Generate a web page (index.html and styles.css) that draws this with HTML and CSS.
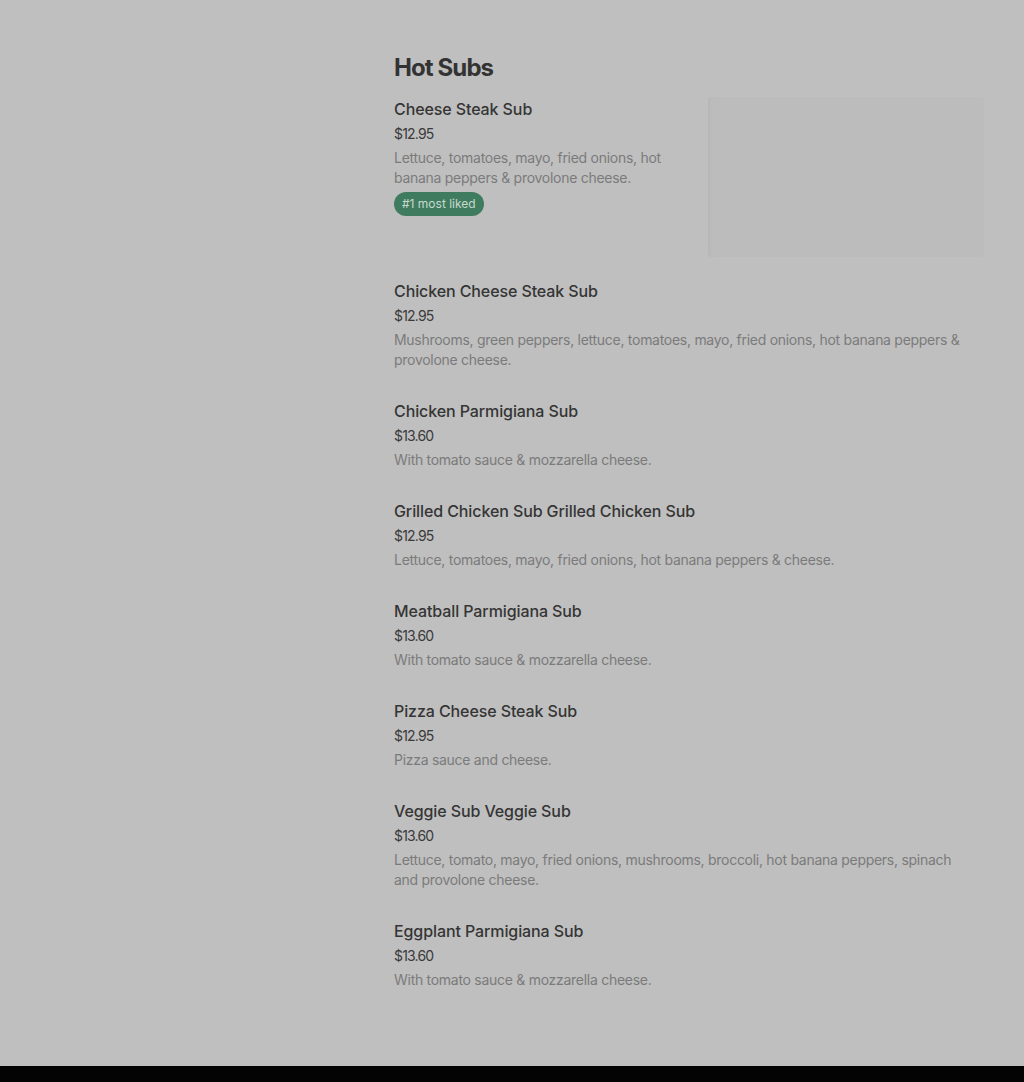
FILE: index.html
```html
<!DOCTYPE html>
<html>
<head>
<meta charset="utf-8">
<link rel="stylesheet" href="styles.css">
</head>
<body>
<div class="page">
  <main class="menu">
    <h2 class="section-title">Hot Subs</h2>
    <ul class="items">
      <li class="item">
        <div class="item-text">
          <div class="name">Cheese Steak Sub</div>
          <div class="price">$12.95</div>
          <div class="desc">Lettuce, tomatoes, mayo, fried onions, hot banana peppers &amp; provolone cheese.</div>
          <span class="badge">#1 most liked</span>
        </div>
        <div class="thumb"></div>
      </li>
      <li class="item">
        <div class="item-text">
          <div class="name">Chicken Cheese Steak Sub</div>
          <div class="price">$12.95</div>
          <div class="desc">Mushrooms, green peppers, lettuce, tomatoes, mayo, fried onions, hot banana peppers &amp; provolone cheese.</div>
        </div>
      </li>
      <li class="item">
        <div class="item-text">
          <div class="name">Chicken Parmigiana Sub</div>
          <div class="price">$13.60</div>
          <div class="desc">With tomato sauce &amp; mozzarella cheese.</div>
        </div>
      </li>
      <li class="item">
        <div class="item-text">
          <div class="name">Grilled Chicken Sub Grilled Chicken Sub</div>
          <div class="price">$12.95</div>
          <div class="desc">Lettuce, tomatoes, mayo, fried onions, hot banana peppers &amp; cheese.</div>
        </div>
      </li>
      <li class="item">
        <div class="item-text">
          <div class="name">Meatball Parmigiana Sub</div>
          <div class="price">$13.60</div>
          <div class="desc">With tomato sauce &amp; mozzarella cheese.</div>
        </div>
      </li>
      <li class="item">
        <div class="item-text">
          <div class="name">Pizza Cheese Steak Sub</div>
          <div class="price">$12.95</div>
          <div class="desc">Pizza sauce and cheese.</div>
        </div>
      </li>
      <li class="item">
        <div class="item-text">
          <div class="name">Veggie Sub Veggie Sub</div>
          <div class="price">$13.60</div>
          <div class="desc">Lettuce, tomato, mayo, fried onions, mushrooms, broccoli, hot banana peppers, spinach and provolone cheese.</div>
        </div>
      </li>
      <li class="item">
        <div class="item-text">
          <div class="name">Eggplant Parmigiana Sub</div>
          <div class="price">$13.60</div>
          <div class="desc">With tomato sauce &amp; mozzarella cheese.</div>
        </div>
      </li>
    </ul>
  </main>
  <footer class="footer-bar"></footer>
</div>
</body>
</html>
```
FILE: styles.css
```css
html, body {
  margin: 0;
  padding: 0;
  background: #bfbfbf;
}
body {
  font-family: Inter, "Noto Sans", sans-serif;
}
.page {
  height: 1082px;
  display: flex;
  flex-direction: column;
  overflow: hidden;
}
.menu {
  flex: 1;
  padding: 51px 40px 0 394px;
}
.section-title {
  margin: 0;
  font-size: 24px;
  line-height: 34px;
  font-weight: 700;
  color: #333333;
  letter-spacing: -0.9px;
}
.items {
  list-style: none;
  margin: 14px 0 0 0;
  padding: 0;
  display: flex;
  flex-direction: column;
  gap: 23px;
  width: 590px;
}
.item {
  display: flex;
  gap: 24px;
}
.item-text {
  flex: 1;
  padding-bottom: 8px;
}
.name {
  font-size: 16px;
  line-height: 20px;
  font-weight: 500;
  color: #353535;
  letter-spacing: -0.1px;
}
.price {
  margin-top: 5px;
  font-size: 14px;
  line-height: 20px;
  color: #3a3a3a;
  letter-spacing: -0.8px;
}
.desc {
  margin-top: 4px;
  max-width: 572px;
  font-size: 14px;
  line-height: 20px;
  color: #7b7b7b;
  letter-spacing: -0.28px;
}
.badge {
  display: inline-block;
  margin-top: 4px;
  padding: 0 8px;
  height: 24px;
  line-height: 24px;
  border-radius: 12px;
  background: #3f7c5f;
  color: #c7d9cf;
  font-size: 12px;
}
.thumb {
  width: 276px;
  height: 160px;
  flex: none;
  margin-top: -2px;
  margin-bottom: 1px;
  background: #bcbcbc;
  border-radius: 4px;
  box-shadow: inset 4px 0 3px -2px rgba(0,0,0,0.03);
}
.footer-bar {
  height: 16px;
  background: #030303;
  flex: none;
}
```
